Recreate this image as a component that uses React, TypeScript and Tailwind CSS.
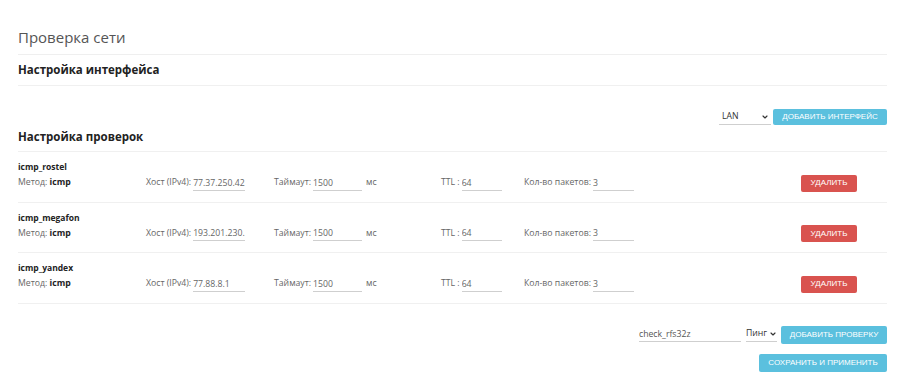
import { ChevronDown } from "lucide-react";

type Check = {
  name: string;
  method: string;
  host: string;
  timeout: string;
  ttl: string;
  packets: string;
};

const checks: Check[] = [
  { name: "icmp_rostel", method: "icmp", host: "77.37.250.42", timeout: "1500", ttl: "64", packets: "3" },
  { name: "icmp_megafon", method: "icmp", host: "193.201.230.150", timeout: "1500", ttl: "64", packets: "3" },
  { name: "icmp_yandex", method: "icmp", host: "77.88.8.1", timeout: "1500", ttl: "64", packets: "3" },
];

const font = "font-['Open_Sans',sans-serif]";
const btnFont = "font-['Liberation_Sans',Arial,sans-serif]";

function Field({ value, width }: { value: string; width: string }) {
  return (
    <input
      readOnly
      value={value}
      className={`${width} h-[15px] border-b border-[#cfcfcf] bg-transparent p-0 text-[8.7px] text-[#666] outline-none`}
    />
  );
}

function CheckRow({ check }: { check: Check }) {
  return (
    <div className="h-[50.5px] border-b border-[#f0f0f0] pt-[9px]">
      <div className="h-[12px] text-[8.5px] font-bold leading-[12px] text-[#222]">{check.name}</div>
      <div className="flex h-[20px] items-center text-[8.7px] text-[#666]">
        <div className="w-[128px]">
          Метод: <span className="font-bold text-[#222]">{check.method}</span>
        </div>
        <div className="flex w-[128px] items-center gap-[2px]">
          <span>Хост (IPv4):</span>
          <Field value={check.host} width="w-[52px]" />
        </div>
        <div className="flex w-[167px] items-center gap-[2px]">
          <span>Таймаут:</span>
          <Field value={check.timeout} width="w-[49px]" />
          <span className="ml-[2px]">мс</span>
        </div>
        <div className="flex w-[83px] items-center gap-[2px]">
          <span>TTL :</span>
          <Field value={check.ttl} width="w-[40px]" />
        </div>
        <div className="flex w-[277px] items-center gap-[2px]">
          <span>Кол-во пакетов:</span>
          <Field value={check.packets} width="w-[41px]" />
        </div>
        <button
          type="button"
          className={`${btnFont} h-[17px] w-[56px] rounded-[2px] bg-[#d9534f] text-[8px] text-white`}
        >
          УДАЛИТЬ
        </button>
      </div>
    </div>
  );
}

export default function App() {
  return (
    <div className={`${font} h-[383px] w-[899px] bg-white pl-[18px] pr-[12px]`}>
      <div className="flex h-[55px] items-end border-b border-[#efefef] pb-[7px]">
        <h1 className="text-[15px] leading-[20px] text-[#555]">Проверка сети</h1>
      </div>
      <div className="flex h-[31px] items-center border-b border-[#f0f0f0]">
        <h2 className="text-[11.5px] font-bold text-[#222]">Настройка интерфейса</h2>
      </div>

      <div className="mt-[22px] flex h-[18px] items-center justify-end">
        <div className="mr-[2px] flex h-[16px] w-[52px] items-center justify-between border-b border-[#cfcfcf] pl-[3px] pr-[2px] text-[8.7px] text-[#333]">
          <span>LAN</span>
          <ChevronDown size={8} strokeWidth={3.5} className="text-[#333]" />
        </div>
        <button
          type="button"
          className={`${btnFont} h-[16px] w-[114px] rounded-[2px] bg-[#5bc0de] text-[8px] text-white`}
        >
          ДОБАВИТЬ ИНТЕРФЕЙС
        </button>
      </div>

      <div className="flex h-[26px] items-center border-b border-[#f0f0f0] pb-[4px]">
        <h2 className="text-[11.5px] font-bold text-[#222]">Настройка проверок</h2>
      </div>

      {checks.map((c) => (
        <CheckRow key={c.name} check={c} />
      ))}

      <div className="mt-[22px] flex h-[18px] items-center justify-end">
        <input
          readOnly
          value="check_rfs32z"
          className="h-[15px] w-[102px] border-b border-[#cfcfcf] bg-transparent p-0 text-[8.7px] text-[#555] outline-none"
        />
        <div className="ml-[5px] mr-[4px] flex h-[15px] w-[31px] items-center justify-between border-b border-[#cfcfcf] text-[8.7px] text-[#333]">
          <span>Пинг</span>
          <ChevronDown size={8} strokeWidth={3.5} className="text-[#333]" />
        </div>
        <button
          type="button"
          className={`${btnFont} h-[18px] w-[106px] rounded-[2px] bg-[#5bc0de] text-[8px] text-white`}
        >
          ДОБАВИТЬ ПРОВЕРКУ
        </button>
      </div>
      <div className="mt-[10px] flex justify-end">
        <button
          type="button"
          className={`${btnFont} h-[18px] w-[128px] rounded-[2px] bg-[#5bc0de] text-[8px] text-white`}
        >
          СОХРАНИТЬ И ПРИМЕНИТЬ
        </button>
      </div>
    </div>
  );
}
